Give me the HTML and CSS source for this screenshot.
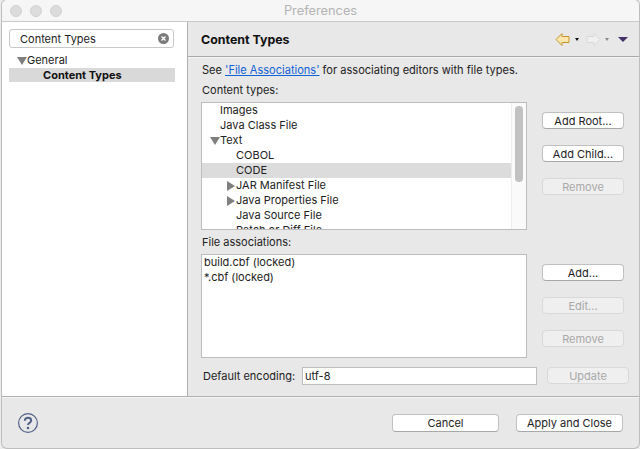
FILE: index.html
```html
<!DOCTYPE html>
<html lang="en">
<head>
    <meta charset="UTF-8">
    <title>Preferences</title>
    <link rel="stylesheet" href="styles.css">
</head>
<body>
    <div class="window">
        <div class="titlebar">
            <div class="lights"><i></i><i></i><i></i></div>
            <div class="title">Preferences</div>
        </div>
        <div class="main">
            <div class="sidebar">
                <div class="search">
                    <span>Content Types</span>
                    <svg class="clear" width="11" height="11" viewBox="0 0 11 11">
                        <circle cx="5.5" cy="5.5" r="5.5" fill="#7b7b7b"/>
                        <path d="M3.500 3.500l4 4M7.500 3.500l-4 4" stroke="#fff" stroke-width="1.300"/>
                    </svg>
                </div>
                <div class="nav-row"><b class="tri-down"></b>General</div>
                <div class="nav-row nav-sel">Content Types</div>
            </div>
            <div class="content">
                <div class="page-head">
                    <h1>Content Types</h1>
                    <div class="page-tools">
                        <svg width="15" height="13" viewBox="0 0 15 13">
                            <path d="M1 6.500L7 .5v3h7v6H7v3z" fill="#fbe7ae" stroke="#c8922c"/>
                        </svg>
                        <b class="mini mini-on"></b>
                        <svg class="fwd" width="15" height="13" viewBox="0 0 15 13">
                            <path d="M14 6.500L8 .5v3H1v6h7v3z" fill="#f0f0f0" stroke="#d8d8d8"/>
                        </svg>
                        <b class="mini mini-off"></b>
                        <b class="menu-tri"></b>
                    </div>
                </div>
                <div class="page-body">
                    <p class="intro">See <a href="#">'File Associations'</a> for associating editors with file types.</p>
                    <div class="label">Content types:</div>
                    <div class="split">
                        <div class="list types">
                            <div class="rows">
                                <div class="row ind1">Images</div>
                                <div class="row ind1">Java Class File</div>
                                <div class="row ind1"><b class="tri-down"></b>Text</div>
                                <div class="row ind2">COBOL</div>
                                <div class="row ind2 row-sel">CODE</div>
                                <div class="row ind2"><b class="tri-right"></b>JAR Manifest File</div>
                                <div class="row ind2"><b class="tri-right"></b>Java Properties File</div>
                                <div class="row ind2">Java Source File</div>
                                <div class="row ind2">Patch or Diff File</div>
                            </div>
                            <div class="scroll"><div class="thumb"></div></div>
                        </div>
                        <div class="buttons">
                            <button>Add Root...</button>
                            <button>Add Child...</button>
                            <button disabled>Remove</button>
                        </div>
                    </div>
                    <div class="label label-assoc">File associations:</div>
                    <div class="split">
                        <div class="list assoc">
                            <div class="row">build.cbf (locked)</div>
                            <div class="row">*.cbf (locked)</div>
                        </div>
                        <div class="buttons">
                            <button>Add...</button>
                            <button disabled>Edit...</button>
                            <button disabled>Remove</button>
                        </div>
                    </div>
                    <div class="encoding">
                        <span>Default encoding:</span>
                        <div class="enc-input">utf-8</div>
                        <button disabled>Update</button>
                    </div>
                </div>
            </div>
        </div>
        <div class="footer">
            <svg class="help" width="20" height="20" viewBox="0 0 20 20">
                <circle cx="10" cy="10" r="9.400" fill="none" stroke="#4f6187" stroke-width="1.200"/>
                <path d="M6.800 7.800C6.800 5.900 8.300 4.800 10 4.800s3.200 1 3.200 2.800c0 2.300-3.200 2.300-3.200 4.500" fill="none" stroke="#4f6187" stroke-width="2"/>
                <circle cx="10" cy="15" r="1.300" fill="#4f6187"/>
            </svg>
            <div class="footer-btns">
                <button>Cancel</button>
                <button>Apply and Close</button>
            </div>
        </div>
    </div>
</body>
</html>
```

FILE: styles.css
```css
html, body {
    height: 100%;
}
body {
    margin: 0;
    background-color: #ececec;
    font-family: Inter, "Liberation Sans", sans-serif;
    font-size: 11px;
    color: #222;
    overflow: hidden;
}
.window {
    height: 448px;
    margin: 0 1px 0 2px;
    display: flex;
    flex-direction: column;
    background-color: #e8e8e8;
    border-radius: 5px;
    overflow: hidden;
    box-shadow: 0 0 0 1px #bdbdbd;
}
.titlebar {
    height: 21px;
    flex: none;
    display: flex;
    align-items: center;
    position: relative;
    background-color: #f6f6f6;
    border-bottom: 1px solid #c9c9c9;
}
.lights {
    display: flex;
    gap: 8px;
    padding-left: 8px;
}
.lights i {
    width: 12px;
    height: 12px;
    border-radius: 50%;
    background-color: #dcdcdc;
    border: 0.5px solid #d0d0d0;
    box-sizing: border-box;
}
.title {
    position: absolute;
    left: 0;
    right: 0;
    text-align: center;
    font-size: 12.8px;
    color: #b4b4b4;
}
.main {
    flex: 1;
    display: flex;
    min-height: 0;
    border-bottom: 1px solid #b0b0b0;
}
.sidebar {
    width: 178px;
    flex: none;
    background-color: #fff;
    border-right: 1px solid #b0b0b0;
    padding: 7px 0 0 7px;
}
.search {
    width: 149px;
    height: 17px;
    display: flex;
    align-items: center;
    justify-content: space-between;
    padding: 0 4px 0 10px;
    border: 1px solid #c8c8c8;
    border-radius: 3px;
    margin: 0 1px 5px 0;
}
.nav-row {
    width: 158px;
    height: 15px;
    line-height: 15px;
    padding-left: 8px;
    display: flex;
    align-items: center;
}
.nav-sel {
    width: 132px;
    height: 14px;
    padding-left: 34px;
    background-color: #d9d9d9;
    font-weight: bold;
    color: #111;
}
.tri-down {
    width: 0;
    height: 0;
    border-left: 5px solid transparent;
    border-right: 5px solid transparent;
    border-top: 8px solid #7f7f7f;
}
.tri-right {
    width: 0;
    height: 0;
    margin: 0 1px 0 -9px;
    border-top: 5px solid transparent;
    border-bottom: 5px solid transparent;
    border-left: 8px solid #7f7f7f;
}
.content {
    flex: 1;
    min-width: 0;
}
.page-head {
    height: 34px;
    display: flex;
    align-items: center;
    justify-content: space-between;
    padding: 0 11px 0 13px;
    border-bottom: 1px solid #a8a8a8;
    box-shadow: 0 1px 0 #f5f5f5;
}
.page-head h1 {
    margin: 0;
    font-size: 12.4px;
    font-weight: bold;
    color: #111;
}
.page-tools {
    display: flex;
    align-items: center;
}
.mini {
    width: 0;
    height: 0;
    margin: 0 7px 0 4px;
    border-left: 2.5px solid transparent;
    border-right: 2.5px solid transparent;
    border-top: 3px solid #111;
}
.mini-on {
    margin-left: 5px;
}
.mini-off {
    border-top-color: #888;
    margin-right: 9px;
}
.menu-tri {
    width: 0;
    height: 0;
    border-left: 5px solid transparent;
    border-right: 5px solid transparent;
    border-top: 5px solid #45306a;
}
.page-body {
    padding: 6px 0 0 13px;
}
.intro {
    margin: 0;
    height: 14px;
    line-height: 14px;
    padding-left: 1px;
    font-size: 11.05px;
}
.intro a {
    color: #0f62d6;
}
.label {
    margin: 6px 0 5px;
    height: 14px;
    line-height: 14px;
    padding-left: 1px;
}
.label-assoc {
    margin: 5px 0 5px;
}
.split {
    display: flex;
}
.list {
    width: 324px;
    background-color: #fff;
    border: 1px solid #bdbdbd;
    flex: none;
}
.types {
    height: 126px;
    display: flex;
    overflow: hidden;
}
.assoc {
    height: 102px;
}
.rows {
    flex: 1;
    min-width: 0;
}
.row {
    height: 15px;
    line-height: 15px;
    padding-left: 2px;
    display: flex;
    align-items: center;
}
.ind1 {
    padding-left: 18px;
}
.ind2 {
    padding-left: 34px;
}
.ind1 .tri-down {
    margin-left: -10px;
}
.row-sel {
    background-color: #dcdcdc;
}
.scroll {
    width: 15px;
    flex: none;
    background-color: #fafafa;
    border-left: 1px solid #ececec;
    padding: 3px 0 0 3px;
    box-sizing: border-box;
}
.thumb {
    width: 8px;
    height: 76px;
    background-color: #c1c1c1;
    border-radius: 4px;
}
.buttons {
    display: flex;
    flex-direction: column;
    gap: 16px;
    padding: 10px 0 0 15px;
}
button {
    width: 82px;
    height: 17px;
    padding: 0;
    font-family: inherit;
    font-size: 11px;
    color: #222;
    background-color: #fff;
    border: 1px solid #c0c0c0;
    border-bottom-color: #a8a8a8;
    border-radius: 4px;
}
button:disabled {
    color: #a8a8a8;
    background-color: #efefef;
    border-color: #d8d8d8;
}
.encoding {
    display: flex;
    align-items: flex-start;
    margin-top: 9px;
    padding-left: 2px;
}
.encoding span {
    width: 99px;
    line-height: 18px;
}
.enc-input {
    width: 231px;
    height: 16px;
    line-height: 16px;
    padding-left: 2px;
    background-color: #fff;
    border: 1px solid #bdbdbd;
    margin-right: 10px;
}
.footer {
    height: 51px;
    flex: none;
    display: flex;
    align-items: center;
    justify-content: space-between;
    padding: 0 16px;
    border-top: 1px solid #f4f4f4;
    box-sizing: border-box;
}
.footer-btns {
    display: flex;
    gap: 17px;
}
.footer-btns button {
    width: 107px;
    height: 18px;
}
```
